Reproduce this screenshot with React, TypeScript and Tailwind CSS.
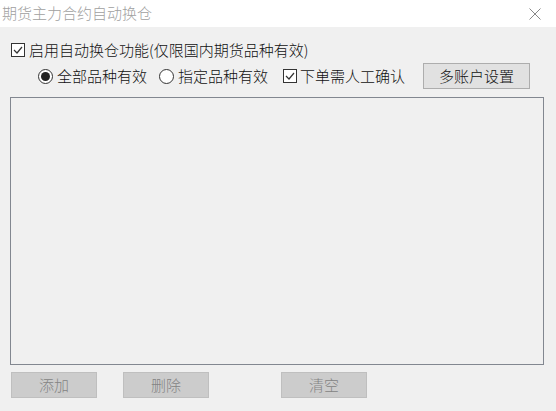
import React from "react";

const font = { fontFamily: '"Noto Sans CJK SC", "Noto Sans", sans-serif' };

function Check({ checked }: { checked: boolean }) {
  return (
    <span className="flex h-[14px] w-[14px] shrink-0 items-center justify-center border border-[#333] bg-white">
      {checked && (
        <svg width="10" height="10" viewBox="0 0 10 10" fill="none">
          <path d="M1 5 L4 8 L9 2" stroke="#333" strokeWidth="1.2" />
        </svg>
      )}
    </span>
  );
}

function Radio({ checked }: { checked: boolean }) {
  return (
    <span className="flex h-[15px] w-[15px] shrink-0 items-center justify-center rounded-full border border-[#333] bg-white">
      {checked && <span className="h-[9px] w-[9px] rounded-full bg-[#222]" />}
    </span>
  );
}

function GrayButton({ label }: { label: string }) {
  return (
    <button className="flex h-[26px] w-[86px] items-center justify-center border border-[#bfbfbf] bg-[#cccccc] text-[15px] font-light text-[#838383]">
      {label}
    </button>
  );
}

export default function App() {
  return (
    <div className="flex h-[411px] w-[556px] flex-col bg-[#f0f0f0] text-[15px] font-light text-[#111]" style={font}>
      {/* 标题栏 */}
      <div className="flex h-[27px] items-center justify-between bg-white pl-[2px] pr-[15px]">
        <span className="text-[15px] text-[#a0a0a0]">期货主力合约自动换仓</span>
        <svg width="12" height="12" viewBox="0 0 12 12">
          <path d="M0.5 0.5 L11.5 11.5 M11.5 0.5 L0.5 11.5" stroke="#888" strokeWidth="1" />
        </svg>
      </div>

      <div className="flex flex-col px-[10px]">
        <label className="mt-[13px] flex h-[20px] items-center gap-[4px] pl-px">
          <Check checked />
          <span>启用自动换仓功能(仅限国内期货品种有效)</span>
        </label>

        <div className="mt-[3px] flex h-[26px] items-center pl-[28px]">
          <label className="flex items-center gap-[4px]">
            <Radio checked />
            <span>全部品种有效</span>
          </label>
          <label className="ml-[12px] flex items-center gap-[4px]">
            <Radio checked={false} />
            <span>指定品种有效</span>
          </label>
          <label className="ml-[15px] flex items-center gap-[3px]">
            <Check checked />
            <span>下单需人工确认</span>
          </label>
          <button className="ml-[18px] flex h-[26px] w-[107px] items-center justify-center border border-[#adadad] bg-[#e1e1e1] text-[15px] text-[#111]">
            多账户设置
          </button>
        </div>

        <div className="mt-[8px] h-[268px] w-[534px] border border-[#828790] bg-[#f0f0f0]" />

        <div className="mt-[7px] flex items-center pl-px">
          <GrayButton label="添加" />
          <div className="ml-[26px]">
            <GrayButton label="删除" />
          </div>
          <div className="ml-[72px]">
            <GrayButton label="清空" />
          </div>
        </div>
      </div>
    </div>
  );
}
